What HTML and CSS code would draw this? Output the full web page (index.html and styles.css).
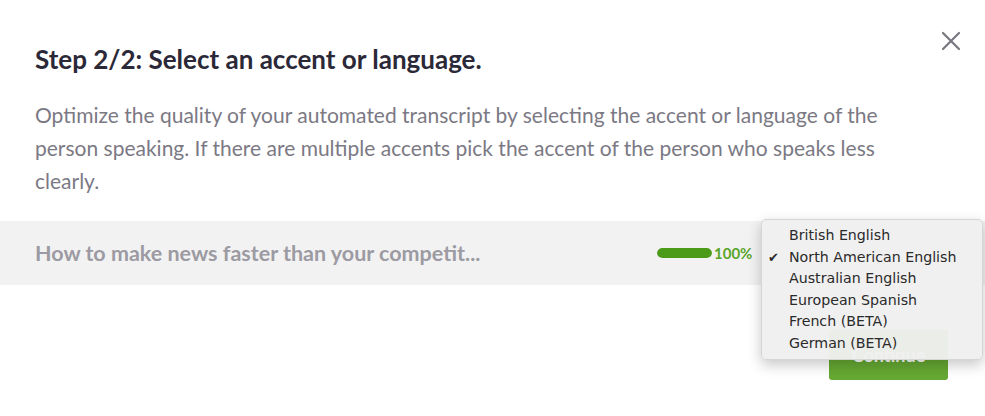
FILE: index.html
```html
<!DOCTYPE html>
<html>
<head>
<meta charset="utf-8">
<link rel="stylesheet" href="styles.css">
</head>
<body>
<div class="modal">
  <div class="header">
    <h1 class="title">Step 2/2: Select an accent or language.</h1>
    <button class="close" aria-label="Close">
      <svg width="20" height="20" viewBox="0 0 20 20"><path d="M2 2 L18 18 M18 2 L2 18" stroke="#78767f" stroke-width="2.2" stroke-linecap="round" fill="none"/></svg>
    </button>
  </div>
  <p class="desc">Optimize the quality of your automated transcript by selecting the accent or language of the person speaking. If there are multiple accents pick the accent of the person who speaks less clearly.</p>
  <div class="row">
    <div class="row-title">How to make news faster than your competit...</div>
    <div class="progress">
      <div class="bar"><div class="fill" style="width:100%"></div></div>
      <span class="pct">100%</span>
    </div>
    <ul class="menu">
      <li>British English</li>
      <li class="checked">North American English</li>
      <li>Australian English</li>
      <li>European Spanish</li>
      <li>French (BETA)</li>
      <li>German (BETA)</li>
    </ul>
  </div>
  <div class="footer">
    <button class="continue">Continue</button>
  </div>
</div>
</body>
</html>
```
FILE: styles.css
```css
* { box-sizing: border-box; }
html, body { margin: 0; padding: 0; background: #fff; }
body { font-family: Lato, "Open Sans", sans-serif; width: 985px; height: 416px; overflow: hidden; }
.modal { position: relative; padding-top: 26px; }
.header { display: flex; justify-content: space-between; align-items: flex-start; padding: 0 24px 0 35px; }
.title { margin: 17px 0 0; font-size: 26px; font-weight: 700; color: #2b2838; line-height: 32px; }
.close { border: 0; background: none; padding: 0; margin-top: 5px; width: 20px; height: 20px; cursor: pointer; }
.desc { margin: 23px 0 0; padding: 0 65px 0 35px; font-size: 21px; line-height: 33px; color: #7b7984; }
.row { position: relative; margin-top: 24px; height: 64px; background: #f2f2f2; display: flex; align-items: center; padding-left: 35px; }
.row-title { font-size: 21.5px; font-weight: 700; color: #9c9aa2; width: 622px; white-space: nowrap; }
.progress { display: flex; align-items: center; gap: 2px; }
.bar { width: 55px; height: 10px; border-radius: 5px; background: #e0e0e0; overflow: hidden; }
.fill { height: 100%; background: #4b9b19; border-radius: 5px; }
.pct { font-size: 15px; font-weight: 700; color: #5aa52a; }
.menu { position: absolute; left: 761px; top: -2px; width: 222px; margin: 0; padding: 5px 0 5px; list-style: none; background: rgba(240,240,240,0.97); border-radius: 5px; border: 1px solid #d6d6d6; box-shadow: 0 5px 14px rgba(0,0,0,0.22); font-family: "DejaVu Sans", sans-serif; font-size: 14.2px; color: #2a2a2a; z-index: 2; }
.menu li { height: 21.5px; line-height: 21.5px; padding-left: 27px; position: relative; }
.menu li.checked::before { content: "\2714"; position: absolute; left: 6px; font-size: 13px; }
.footer { display: flex; justify-content: flex-end; padding-right: 37px; margin-top: 45px; }
.continue { width: 119px; height: 50px; border: 0; border-radius: 3px; background: #65a832; color: #fff; font-family: Lato, sans-serif; font-weight: 700; font-size: 18px; }
```
